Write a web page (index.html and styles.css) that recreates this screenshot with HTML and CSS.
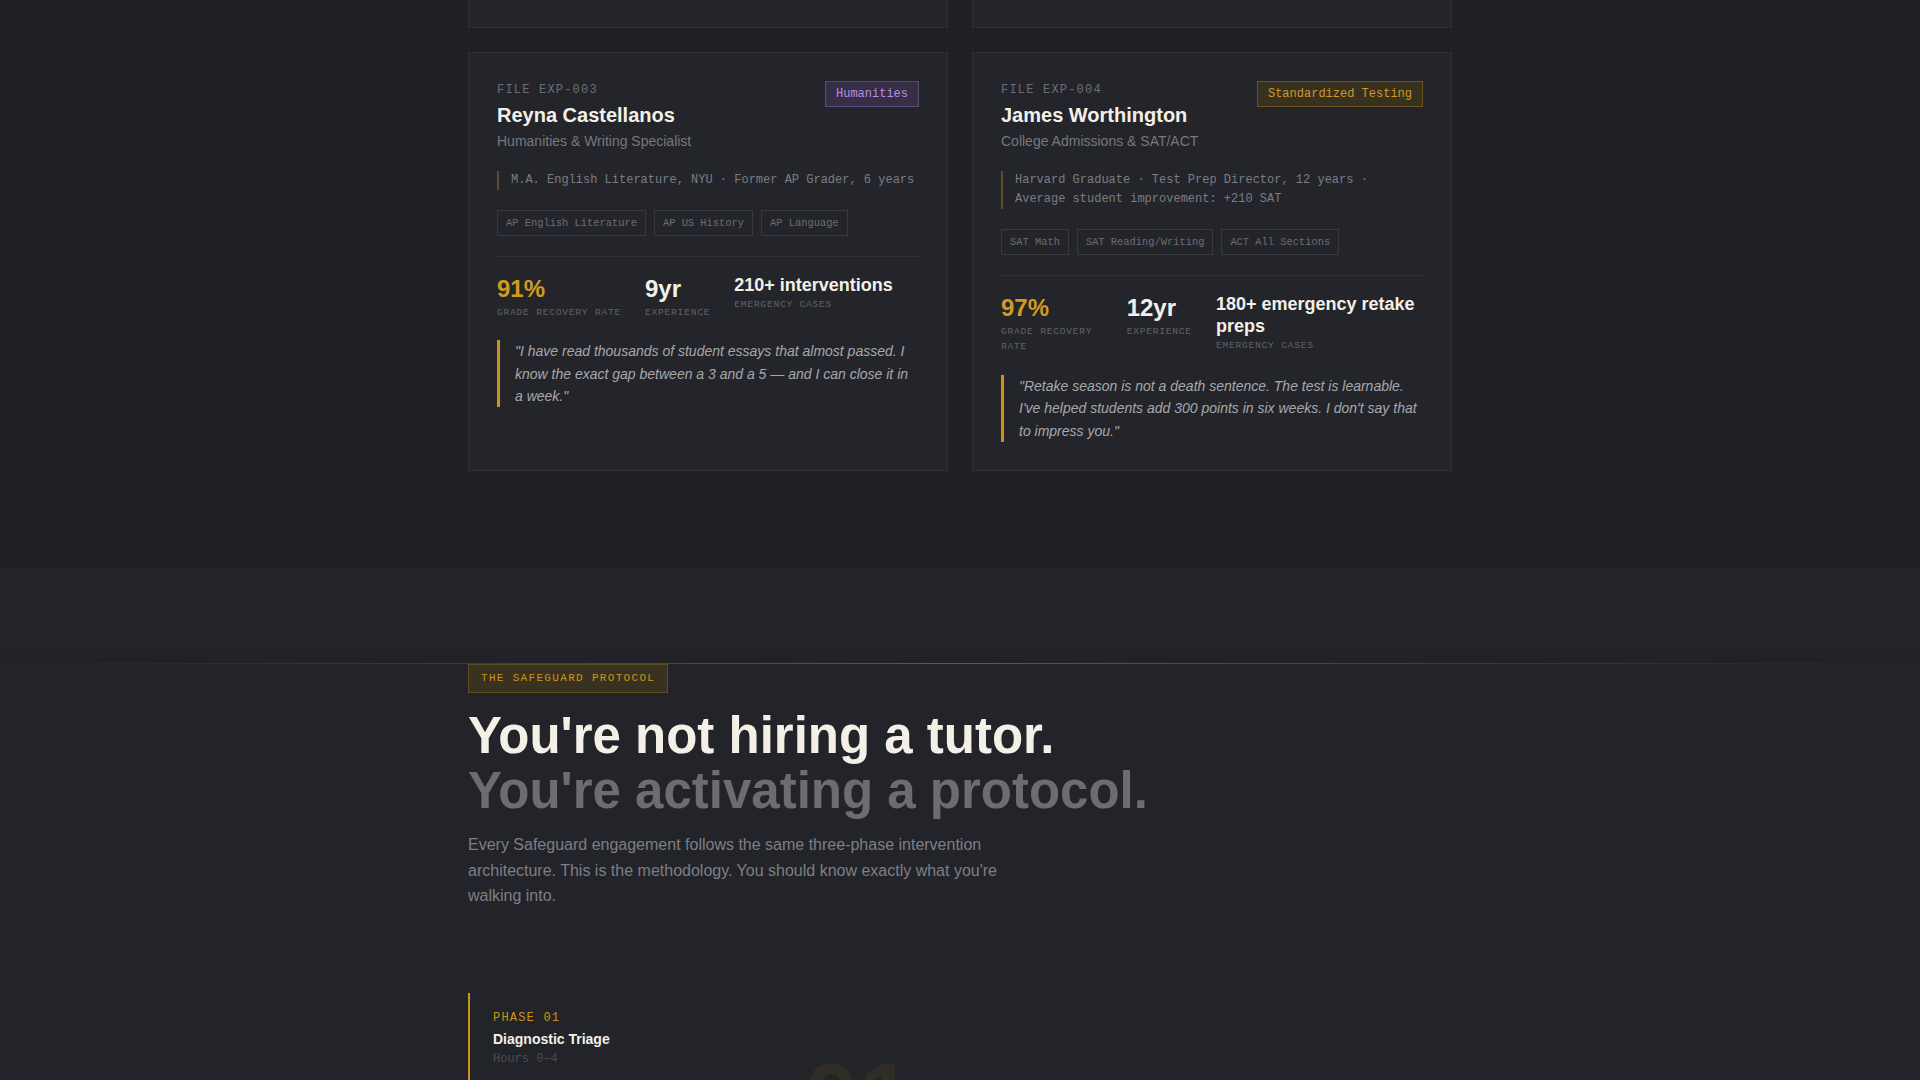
FILE: index.html
```html
<!DOCTYPE html>
<html lang="en">
<head>
<meta charset="utf-8">
<title>Safeguard — Experts &amp; Protocol</title>
<link rel="stylesheet" href="styles.css">
</head>
<body>
  <section class="experts">
    <div class="container">
      <div class="card-grid">
        <div class="card card--clipped"></div>
        <div class="card card--clipped"></div>

        <article class="card">
          <header class="card-head">
            <div class="card-id">
              <div class="file-label">FILE EXP-003</div>
              <h3 class="expert-name">Reyna Castellanos</h3>
              <div class="expert-role">Humanities &amp; Writing Specialist</div>
            </div>
            <span class="badge badge--purple">Humanities</span>
          </header>
          <div class="credentials">M.A. English Literature, NYU · Former AP Grader, 6 years</div>
          <ul class="subjects">
            <li>AP English Literature</li>
            <li>AP US History</li>
            <li>AP Language</li>
          </ul>
          <div class="stats">
            <div class="stat">
              <div class="stat-value stat-value--gold">91%</div>
              <div class="stat-label">Grade Recovery Rate</div>
            </div>
            <div class="stat">
              <div class="stat-value">9yr</div>
              <div class="stat-label">Experience</div>
            </div>
            <div class="stat">
              <div class="stat-value stat-value--text">210+ interventions</div>
              <div class="stat-label">Emergency Cases</div>
            </div>
          </div>
          <blockquote class="quote">"I have read thousands of student essays that almost passed. I know the exact gap between a 3 and a 5 — and I can close it in a week."</blockquote>
        </article>

        <article class="card">
          <header class="card-head">
            <div class="card-id">
              <div class="file-label">FILE EXP-004</div>
              <h3 class="expert-name">James Worthington</h3>
              <div class="expert-role">College Admissions &amp; SAT/ACT</div>
            </div>
            <span class="badge badge--gold">Standardized Testing</span>
          </header>
          <div class="credentials">Harvard Graduate · Test Prep Director, 12 years · Average student improvement: +210 SAT</div>
          <ul class="subjects">
            <li>SAT Math</li>
            <li>SAT Reading/Writing</li>
            <li>ACT All Sections</li>
          </ul>
          <div class="stats">
            <div class="stat">
              <div class="stat-value stat-value--gold">97%</div>
              <div class="stat-label">Grade Recovery Rate</div>
            </div>
            <div class="stat">
              <div class="stat-value">12yr</div>
              <div class="stat-label">Experience</div>
            </div>
            <div class="stat">
              <div class="stat-value stat-value--text">180+ emergency retake preps</div>
              <div class="stat-label">Emergency Cases</div>
            </div>
          </div>
          <blockquote class="quote">"Retake season is not a death sentence. The test is learnable. I've helped students add 300 points in six weeks. I don't say that to impress you."</blockquote>
        </article>
      </div>
    </div>
  </section>

  <section class="protocol">
    <div class="rule"></div>
    <div class="container">
      <div class="eyebrow">The Safeguard Protocol</div>
      <h2 class="protocol-title">
        <span class="title-strong">You're not hiring a tutor.</span>
        <span class="title-dim">You're activating a protocol.</span>
      </h2>
      <p class="protocol-lede">Every Safeguard engagement follows the same three-phase intervention architecture. This is the methodology. You should know exactly what you're walking into.</p>

      <div class="phases">
        <div class="phase">
          <div class="phase-label">PHASE 01</div>
          <div class="phase-name">Diagnostic Triage</div>
          <div class="phase-time">Hours 0–4</div>
          <div class="phase-num" aria-hidden="true">01</div>
        </div>
      </div>
    </div>
  </section>
</body>
</html>
```

FILE: styles.css
```css
* {
  box-sizing: border-box;
}

html, body {
  margin: 0;
  padding: 0;
}

body {
  background: #1f2024;
  font-family: "Liberation Sans", Arial, sans-serif;
  color: #f0ede6;
  overflow: hidden;
}

.container {
  max-width: 1080px;
  margin: 0 auto;
  padding: 0 48px;
}

/* ---------- Experts ---------- */
.experts {
  background: #1f2024;
  padding-bottom: 96px;
}

.card-grid {
  display: grid;
  grid-template-columns: 1fr 1fr;
  gap: 24px;
}

.card {
  background: #24252a;
  border: 1px solid #2f3136;
  padding: 28px;
  display: flex;
  flex-direction: column;
}

.card--clipped {
  height: 28px;
  border-top: none;
  padding: 0;
}

.card-head {
  display: flex;
  justify-content: space-between;
  align-items: flex-start;
  gap: 16px;
}

.file-label {
  font-family: "Liberation Mono", "Courier New", monospace;
  font-size: 12px;
  line-height: 18px;
  letter-spacing: 0.1em;
  color: #6c6e74;
  margin-bottom: 4px;
}

.expert-name {
  margin: 0;
  font-size: 20px;
  line-height: 24px;
  font-weight: 700;
  color: #f3f0e9;
}

.expert-role {
  margin-top: 4px;
  font-size: 14px;
  line-height: 21px;
  color: #76787e;
}

.badge {
  flex: none;
  font-family: "Liberation Mono", "Courier New", monospace;
  font-size: 12px;
  line-height: 16px;
  padding: 4px 10px;
  border: 1px solid;
  white-space: nowrap;
}

.badge--purple {
  color: #b88fe6;
  background: #352e46;
  border-color: #5a4a7a;
}

.badge--gold {
  color: #d09a22;
  background: #393120;
  border-color: #6a5424;
}

.credentials {
  margin: 19px 0 20px;
  padding-left: 12px;
  border-left: 2px solid #5e4c25;
  font-family: "Liberation Mono", "Courier New", monospace;
  font-size: 12px;
  line-height: 19.2px;
  color: #7b7d83;
}

.subjects {
  list-style: none;
  margin: 0 0 20px;
  padding: 0;
  display: flex;
  flex-wrap: wrap;
  gap: 8px;
}

.subjects li {
  font-family: "Liberation Mono", "Courier New", monospace;
  font-size: 10.4px;
  line-height: 16px;
  padding: 4px 8px;
  border: 1px solid #383a40;
  color: #6b6d73;
}

.stats {
  display: flex;
  gap: 24px;
  border-top: 1px solid #2e3035;
  padding-top: 18px;
  margin-bottom: 20px;
}

.stat-value {
  font-size: 24px;
  line-height: 1.15;
  font-weight: 700;
  color: #f3f0e9;
}

.stat-value--gold {
  color: #d29b20;
}

.stat-value--text {
  font-size: 18px;
  line-height: 1.22;
}

.stat-label {
  margin-top: 2px;
  font-family: "Liberation Mono", "Courier New", monospace;
  font-size: 9.6px;
  line-height: 15.4px;
  letter-spacing: 0.08em;
  text-transform: uppercase;
  color: #606268;
}

.stat-value--text + .stat-label {
  margin-top: 0;
}

.quote {
  margin: 0;
  padding-left: 15px;
  border-left: 3px solid #c9951c;
  font-size: 14px;
  line-height: 22.4px;
  font-style: italic;
  color: #a7a8ac;
}

/* ---------- Protocol ---------- */
.protocol {
  background: #232429;
  padding-top: 96px;
  min-height: 600px;
}

.rule {
  height: 1px;
  background: linear-gradient(90deg, rgba(201, 149, 28, 0) 3%, rgba(201, 149, 28, 0.45) 50%, rgba(201, 149, 28, 0) 97%);
  box-shadow: 0 -4px 6px rgba(16, 17, 22, 0.35);
}

.eyebrow {
  width: fit-content;
  font-family: "Liberation Mono", "Courier New", monospace;
  font-size: 11px;
  line-height: 13px;
  letter-spacing: 0.12em;
  text-transform: uppercase;
  color: #c9951c;
  background: #3a3220;
  border: 1px solid #5f4c22;
  padding: 7px 12px;
  margin-bottom: 15px;
}

.protocol-title {
  margin: 0;
  font-size: 51px;
  line-height: 55px;
  font-weight: 700;
}

.protocol-title span {
  display: block;
}

.title-strong {
  color: #f4f0e7;
}

.title-dim {
  color: #6b6d72;
}

.protocol-lede {
  margin: 14px 0 0;
  max-width: 560px;
  font-size: 16px;
  line-height: 25.6px;
  color: #7d7f85;
}

.phases {
  margin-top: 84px;
}

.phase {
  position: relative;
  min-height: 240px;
  border-left: 2px solid #c9951c;
  padding: 16px 0 0 23px;
}

.phase-label {
  font-family: "Liberation Mono", "Courier New", monospace;
  font-size: 12px;
  line-height: 18px;
  letter-spacing: 0.1em;
  color: #c9951c;
}

.phase-name {
  margin-top: 3px;
  font-size: 14px;
  line-height: 19.6px;
  font-weight: 700;
  color: #f3f0e9;
}

.phase-time {
  margin-top: 1px;
  font-family: "Liberation Mono", "Courier New", monospace;
  font-size: 12px;
  line-height: 18px;
  color: #4a4c52;
}

.phase-num {
  position: absolute;
  left: 334px;
  top: 56px;
  font-size: 98px;
  line-height: 1;
  font-weight: 700;
  color: rgba(201, 149, 28, 0.08);
  pointer-events: none;
}
```
